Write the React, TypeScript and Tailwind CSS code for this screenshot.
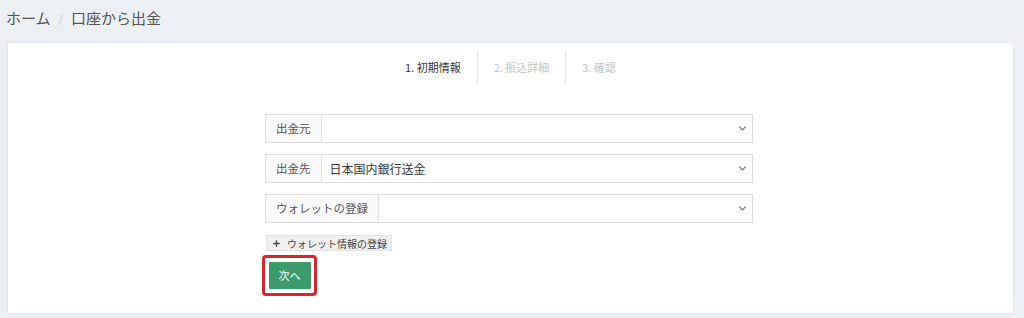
import { ChevronDown, Plus } from "lucide-react";

const font = { fontFamily: '"Noto Sans CJK JP", "Noto Sans", sans-serif' };

const steps = [
  { label: "1. 初期情報", active: true },
  { label: "2. 振込詳細", active: false },
  { label: "3. 確認", active: false },
];

const SelectRow = ({ label, value }: { label: string; value?: string }) => (
  <div className="flex h-[29px] border border-[#dcdcdc] bg-white">
    <div className="flex items-center px-[10px] bg-[#fafafa] border-r border-[#e2e2e2] text-[11.5px] text-[#555] whitespace-nowrap">
      {label}
    </div>
    <div className="flex flex-1 items-center justify-between pl-[8px] pr-[4px] text-[12px] text-[#333]">
      <span>{value}</span>
      <ChevronDown className="w-[11px] h-[11px] text-[#666]" strokeWidth={2.5} />
    </div>
  </div>
);

export default function App() {
  return (
    <div className="w-[1024px] h-[318px] bg-[#eceff4] overflow-hidden" style={font}>
      <div className="h-[42px] flex items-center pl-[6px] pb-[6px] text-[15px] text-[#555]">
        <span>ホーム</span>
        <span className="mx-[8px] text-[#c8c8c8] text-[11px]">/</span>
        <span>口座から出金</span>
      </div>
      <div className="mx-[7px] mr-[10px] h-[272px] bg-white border border-[#e4e7ec] rounded-[2px]">
        <div className="flex justify-center pt-[8px]">
          {steps.map((s, i) => (
            <div
              key={s.label}
              className={`h-[32px] flex items-center px-[16px] text-[11px] ${
                i > 0 ? "border-l border-[#e6e6e6]" : ""
              } ${s.active ? "text-[#333]" : "text-[#c4c4c4]"}`}
            >
              {s.label}
            </div>
          ))}
        </div>
        <div className="w-[488px] ml-[257px] mt-[31px] flex flex-col gap-[11px]">
          <SelectRow label="出金元" />
          <SelectRow label="出金先" value="日本国内銀行送金" />
          <SelectRow label="ウォレットの登録" />
        </div>
        <div className="ml-[258px] mt-[12px]">
          <button className="flex items-center gap-[6px] h-[16px] pl-[5px] pr-[4px] bg-[#efefef] border border-[#e2e2e2] text-[10px] text-[#444]">
            <Plus className="w-[9px] h-[9px]" strokeWidth={3.5} />
            ウォレット情報の登録
          </button>
        </div>
        <div className="ml-[254px] mt-[4px] w-[55px] h-[41px] border-[3px] border-[#d6282b] rounded-[4px] flex items-center justify-center">
          <button className="w-[42px] h-[27px] bg-[#3c9a6c] text-white text-[11px] rounded-[1px]">
            次へ
          </button>
        </div>
      </div>
    </div>
  );
}
